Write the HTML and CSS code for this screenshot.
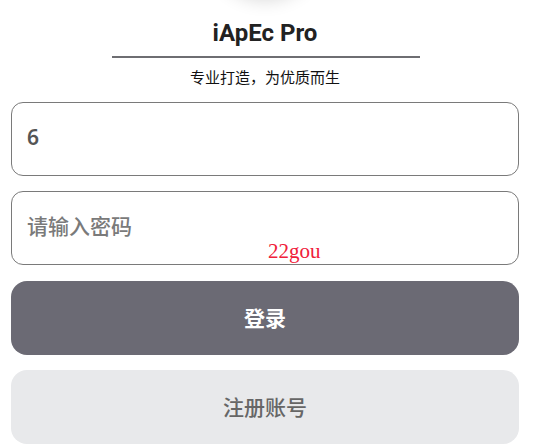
FILE: index.html
```html
<!DOCTYPE html>
<html lang="zh-CN">
<head>
    <meta charset="UTF-8">
    <meta name="viewport" content="width=device-width, initial-scale=1.0">
    <title>iApEc Pro</title>
    <link rel="stylesheet" href="styles.css">
</head>
<body>

<div class="container">
    <div class="header">
        <div class="avatar"></div>
        <h1 class="title">iApEc Pro</h1>
        <div class="divider"></div>
        <p class="slogan">专业打造，为优质而生</p>
    </div>

    <form id="login-form" class="form">
        <input type="text" class="field" id="account" value="6">
        <input type="password" class="field" id="password" placeholder="请输入密码">
        <button type="submit" class="btn btn-primary">登录</button>
        <button type="button" class="btn btn-secondary">注册账号</button>
    </form>

    <span class="watermark">22gou</span>
</div>

</body>
</html>
```

FILE: styles.css
```css
body {
    margin: 0;
    background-color: #fff;
    font-family: Roboto, "Noto Sans", "Noto Sans CJK SC", sans-serif;
    overflow: hidden;
}
.container {
    position: relative;
    padding: 0 16px 0 11px;
}
.header {
    display: flex;
    flex-direction: column;
    align-items: center;
}
.avatar {
    width: 110px;
    height: 110px;
    margin-top: -112px;
    border-radius: 50%;
    background-color: #fff;
    box-shadow: 0 2px 18px rgba(0, 0, 0, 0.16);
}
.title {
    margin: 22px 0 0;
    font-size: 24px;
    line-height: 26px;
    font-weight: bold;
    color: #222;
}
.divider {
    width: 308px;
    height: 2px;
    margin-top: 10px;
    margin-left: 1px;
    background-color: #6e6e72;
}
.slogan {
    margin: 9px 0 0;
    font-family: "Noto Sans CJK SC", sans-serif;
    font-size: 15px;
    line-height: 20px;
    color: #111;
}
.form {
    display: flex;
    flex-direction: column;
    gap: 15px;
    margin-top: 15px;
}
.field {
    box-sizing: border-box;
    height: 74px;
    padding: 0 15px 4px;
    border: 1px solid #7a7a7a;
    border-radius: 12px;
    font-family: "Noto Sans", "Noto Sans CJK SC", sans-serif;
    font-size: 21px;
    font-weight: 600;
    color: #555;
    outline: none;
}
.field::placeholder {
    color: #7a7a7a;
    font-weight: 500;
}
.btn {
    height: 74px;
    padding-bottom: 4px;
    border: none;
    border-radius: 16px;
    font-family: "Noto Sans CJK SC", sans-serif;
    font-size: 21px;
    cursor: pointer;
}
.btn-primary {
    margin-top: 1px;
    background-color: #6b6a74;
    color: #fff;
    font-weight: bold;
}
.btn-secondary {
    background-color: #e8e9eb;
    color: #666;
    font-weight: 500;
}
.watermark {
    position: absolute;
    left: 268px;
    top: 239px;
    font-family: "Liberation Serif", serif;
    font-size: 21px;
    color: #f0203a;
}
```
